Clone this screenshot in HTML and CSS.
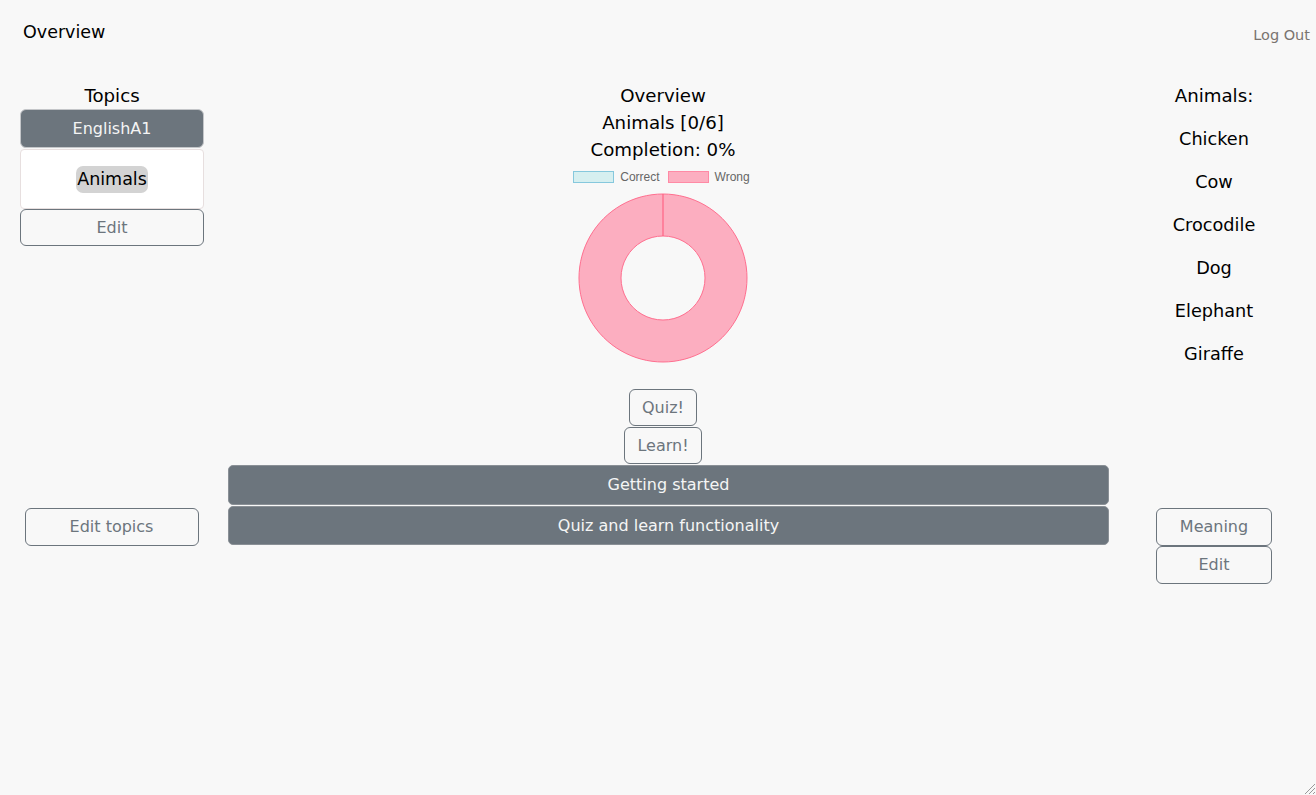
FILE: index.html
```html
<!DOCTYPE html>
<html>
<head>
<meta charset="utf-8">
<link rel="stylesheet" href="styles.css">
</head>
<body>
<header class="topbar">
  <div class="brand">Overview</div>
  <a class="logout">Log Out</a>
</header>
<main class="layout">
  <section class="left">
    <div class="heading">Topics</div>
    <button class="btn btn-dark btn-block">EnglishA1</button>
    <div class="topic-box"><span class="pill">Animals</span></div>
    <button class="btn btn-outline btn-block">Edit</button>
  </section>
  <section class="center">
    <div class="summary">
      <div class="heading">Overview</div>
      <div class="heading">Animals [0/6]</div>
      <div class="heading">Completion: 0%</div>
      <div class="legend">
        <span class="swatch swatch-correct"></span><span class="legend-label">Correct</span>
        <span class="swatch swatch-wrong"></span><span class="legend-label">Wrong</span>
      </div>
      <svg class="donut" width="170" height="170" viewBox="0 0 170 170">
        <path d="M85 1 A84 84 0 1 1 84.99 1 Z M85 43 A42 42 0 1 0 85.01 43 Z" fill="#fcaec0" fill-rule="evenodd" stroke="#ff6f8f" stroke-width="1"/>
        <line x1="85" y1="1" x2="85" y2="43" stroke="#ff6384" stroke-width="1.2"/>
      </svg>
      <button class="btn btn-outline btn-small">Quiz!</button>
      <button class="btn btn-outline btn-small">Learn!</button>
    </div>
  </section>
  <section class="right">
    <div class="heading">Animals:</div>
    <div class="word">Chicken</div>
    <div class="word">Cow</div>
    <div class="word">Crocodile</div>
    <div class="word">Dog</div>
    <div class="word">Elephant</div>
    <div class="word">Giraffe</div>
  </section>
  <section class="left-bottom">
    <button class="btn btn-outline btn-topics">Edit topics</button>
  </section>
  <section class="center-bottom">
    <button class="bar">Getting started</button>
    <button class="bar">Quiz and learn functionality</button>
  </section>
  <section class="right-bottom">
    <button class="btn btn-outline btn-block">Meaning</button>
    <button class="btn btn-outline btn-block">Edit</button>
  </section>
</main>
<svg class="resizer" width="14" height="14" viewBox="0 0 14 14">
  <line x1="13" y1="3" x2="3" y2="13" stroke="#999" stroke-width="1"/>
  <line x1="13" y1="7" x2="7" y2="13" stroke="#999" stroke-width="1"/>
  <line x1="13" y1="11" x2="11" y2="13" stroke="#999" stroke-width="1"/>
</svg>
</body>
</html>
```
FILE: styles.css
```css
html, body {
  margin: 0;
  padding: 0;
  background: #f8f8f8;
  font-family: "DejaVu Sans", Verdana, sans-serif;
  color: #000;
  height: 100%;
  overflow: hidden;
}

.topbar {
  display: flex;
  justify-content: space-between;
  align-items: flex-start;
  padding: 21px 6px 0 23px;
  height: 22px;
}

.brand {
  font-size: 17.5px;
  line-height: 22px;
}

.logout {
  font-size: 14.5px;
  line-height: 20px;
  margin-top: 4px;
  color: #7a7470;
  cursor: pointer;
}

.layout {
  display: grid;
  grid-template-columns: 184px 881px 139px;
  column-gap: 24px;
  padding-left: 20px;
  margin-top: 38.5px;
}

.layout > .right,
.layout > .right-bottom { padding-left: 23px; }

.heading {
  font-size: 18.2px;
  line-height: 27px;
  text-align: center;
}

.btn {
  font-family: "DejaVu Sans", Verdana, sans-serif;
  font-size: 16px;
  border-radius: 6px;
  border: 1px solid #6c757d;
  padding: 0 12px;
  height: 37px;
  cursor: pointer;
  display: block;
}

.btn-block { width: 100%; }

.btn-dark {
  background: #6c757d;
  color: #f4f4f4;
  height: 39px;
  border-color: #c4c6c9;
}

.btn-outline {
  background: transparent;
  color: #6c757d;
}

.topic-box {
  margin-top: 1px;
  height: 58px;
  background: #fff;
  border: 1px solid #e7dfdf;
  border-radius: 4px;
  display: flex;
  align-items: center;
  justify-content: center;
}

.pill {
  background: #d3d3d3;
  border-radius: 7px;
  font-size: 17.5px;
  line-height: 27px;
  padding: 0 1px;
  margin-top: 2px;
}

.summary {
  display: flex;
  flex-direction: column;
  align-items: center;
  padding-right: 11px;
}

.legend {
  display: flex;
  align-items: center;
  height: 16px;
  margin-top: 6px;
  font-family: "Liberation Sans", Arial, sans-serif;
  font-size: 12px;
  color: #666;
  margin-right: 3px;
}

.swatch {
  display: inline-block;
  width: 39px;
  height: 10px;
  margin-right: 6px;
}

.swatch-correct {
  background: #d6eff0;
  border: 1px solid #86c8dd;
}

.swatch-wrong {
  background: #fcaec0;
  border: 1px solid #ff8aa5;
  margin-left: 8px;
}

.donut {
  display: block;
  margin-top: 8px;
}

.btn-small {
  padding: 0 12px;
}

.donut + .btn-small { margin-top: 26px; }
.btn-small + .btn-small { margin-top: 1px; }

.right {
  display: flex;
  flex-direction: column;
  align-items: center;
}

.word {
  font-size: 17.7px;
  line-height: 27px;
  margin-top: 16px;
}

.heading + .word { margin-top: 17px; }

.left-bottom {
  padding-top: 44px;
  display: flex;
  justify-content: center;
}

.btn-topics {
  width: 174px;
  height: 38px;
  margin-left: -1px;
}

.center-bottom {
  display: flex;
  flex-direction: column;
  gap: 1px;
  padding-top: 1px;
}

.bar {
  height: 40px;
  background: #6c757d;
  color: #f5f5f5;
  border: 1px solid #8a9096;
  border-radius: 5px;
  font-family: "DejaVu Sans", Verdana, sans-serif;
  font-size: 16px;
  width: 100%;
  cursor: pointer;
}

.bar + .bar { height: 39px; }

.right-bottom {
  padding-top: 44px;
}

.right-bottom .btn { height: 38px; }

.resizer {
  position: fixed;
  right: 0;
  bottom: 0;
}
```
